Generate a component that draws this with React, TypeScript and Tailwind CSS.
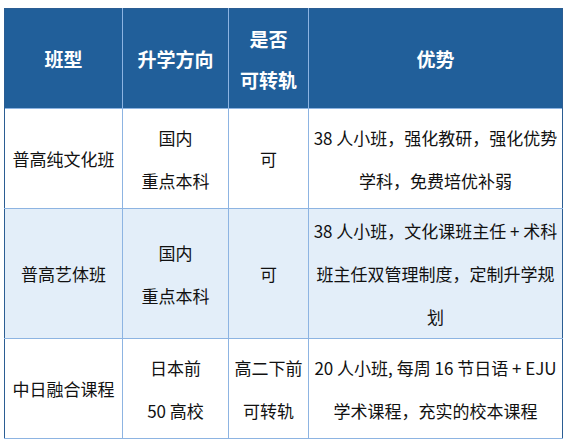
import React from "react";

const rows = [
  {
    name: "普高纯文化班",
    dir: ["国内", "重点本科"],
    turn: ["可"],
    adv: ["38 人小班，强化教研，强化优势", "学科，免费培优补弱"],
    bg: "bg-white",
  },
  {
    name: "普高艺体班",
    dir: ["国内", "重点本科"],
    turn: ["可"],
    adv: ["38 人小班，文化课班主任 + 术科", "班主任双管理制度，定制升学规", "划"],
    bg: "bg-[#e3eef9]",
  },
  {
    name: "中日融合课程",
    dir: ["日本前", "50 高校"],
    turn: ["高二下前", "可转轨"],
    adv: ["20 人小班, 每周 16 节日语 + EJU", "学术课程，充实的校本课程"],
    bg: "bg-white",
  },
];

const Lines = ({ items }: { items: string[] }) => (
  <>
    {items.map((t, i) => (
      <div key={i} className="whitespace-nowrap">
        {t}
      </div>
    ))}
  </>
);

const App = () => {
  return (
    <div
      className="w-[568px] h-[445px] bg-white pl-[4px] pt-[8px]"
      style={{ fontFamily: '"Noto Sans CJK SC", "Noto Sans", sans-serif' }}
    >
      <table className="table-fixed border-collapse w-[558px] border border-[#2b5d93]">
        <colgroup>
          <col className="w-[118px]" />
          <col className="w-[106px]" />
          <col className="w-[80px]" />
          <col className="w-[254px]" />
        </colgroup>
        <thead>
          <tr className="h-[100px] bg-[#215f9a] text-white text-[19px] font-bold leading-[41px]">
            <th className="border-r border-[#8db4e2]">班型</th>
            <th className="border-r border-[#8db4e2]">升学方向</th>
            <th className="border-r border-[#8db4e2]">
              <div>是否</div>
              <div>可转轨</div>
            </th>
            <th>优势</th>
          </tr>
        </thead>
        <tbody className="text-[17px] text-[#111] leading-[43px] text-center">
          {rows.map((r, i) => (
            <tr
              key={i}
              className={`${r.bg} ${i === 1 ? "h-[130px]" : "h-[100px]"}`}
            >
              <td className="border border-[#8db4e2] border-l-[#2b5d93]">{r.name}</td>
              <td className="border border-[#8db4e2]">
                <Lines items={r.dir} />
              </td>
              <td className="border border-[#8db4e2]">
                <Lines items={r.turn} />
              </td>
              <td className="border border-[#8db4e2] border-r-[#2b5d93]">
                <Lines items={r.adv} />
              </td>
            </tr>
          ))}
        </tbody>
      </table>
    </div>
  );
};

export default App;
